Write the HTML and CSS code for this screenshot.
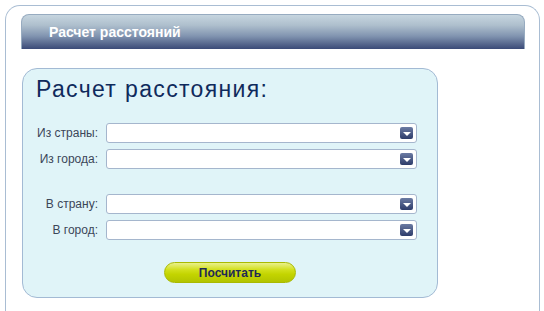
FILE: index.html
```html
<!DOCTYPE html>
<html lang="ru">
<head>
    <meta charset="UTF-8">
    <meta name="viewport" content="width=device-width, initial-scale=1.0">
    <title>Расчет расстояний</title>
    <link rel="stylesheet" href="styles.css">
</head>
<body>
    <div class="frame">
        <div class="frame-header">Расчет расстояний</div>

        <div class="calc-panel">
            <h1>Расчет расстояния:</h1>

            <form class="calc-form">
                <div class="row">
                    <label>Из страны:</label>
                    <div class="combo"><span class="combo-arrow"></span></div>
                </div>
                <div class="row">
                    <label>Из города:</label>
                    <div class="combo"><span class="combo-arrow"></span></div>
                </div>

                <div class="row row-gap">
                    <label>В страну:</label>
                    <div class="combo"><span class="combo-arrow"></span></div>
                </div>
                <div class="row">
                    <label>В город:</label>
                    <div class="combo"><span class="combo-arrow"></span></div>
                </div>

                <div class="actions">
                    <button type="button">Посчитать</button>
                </div>
            </form>
        </div>
    </div>
</body>
</html>
```

FILE: styles.css
```css
body {
    margin: 0;
    background: #fff;
    font-family: 'Liberation Sans', Arial, sans-serif;
}

.frame {
    box-sizing: border-box;
    height: 306px;
    margin: 5px 4px 0 5px;
    border: 1px solid #a9bdd3;
    border-bottom: none;
    border-radius: 15px 15px 0 0;
    padding: 8px 14px 0 15px;
}

.frame-header {
    height: 34px;
    border: 1px solid #97abc0;
    border-bottom: none;
    border-radius: 8px 8px 0 0;
    background: linear-gradient(#c6d5df 0%, #aebfcd 30%, #8194b0 62%, #3b4a77 100%);
    color: #fff;
    font-weight: bold;
    font-size: 14px;
    line-height: 34px;
    padding-left: 27px;
}

.calc-panel {
    width: 414px;
    margin: 19px 0 0 1px;
    background: #e0f4f8;
    border: 1px solid #a3bad4;
    border-radius: 15px;
    padding: 7px 0 14px;
}

/* title */
h1 {
    margin: 0 0 0 13px;
    font-weight: normal;
    font-size: 23px;
    line-height: 26px;
    letter-spacing: 1.35px;
    color: #0f2a5c;
}

.calc-form {
    margin-top: 21px;
}

.row {
    display: flex;
    align-items: center;
    gap: 8px;
    margin-bottom: 6px;
}

.row-gap {
    margin-top: 25px;
}

.row label {
    width: 75px;
    text-align: right;
    font-size: 12px;
    color: #3b4658;
}

.combo {
    width: 306px;
    height: 18px;
    background: #fff;
    border: 1px solid #a5b6cd;
    border-radius: 3px;
    display: flex;
    justify-content: flex-end;
    align-items: center;
    padding-right: 3px;
}

.combo-arrow {
    display: flex;
    justify-content: center;
    align-items: center;
    width: 13px;
    height: 12px;
    border-radius: 2px;
    background: linear-gradient(#6b7ba3, #2d3c6a);
}

.combo-arrow::after {
    content: "";
    border-left: 4px solid transparent;
    border-right: 4px solid transparent;
    border-top: 4px solid #fff;
    margin-top: 1px;
}

.actions {
    display: flex;
    justify-content: center;
    margin-top: 22px;
}

.actions button {
    width: 132px;
    height: 21px;
    border: 1px solid #a9ba00;
    border-radius: 11px;
    background: linear-gradient(#eaf08c 0%, #d2e01c 35%, #c3d400 60%, #b2c400 100%);
    font-family: 'Liberation Sans', Arial, sans-serif;
    font-weight: bold;
    font-size: 12px;
    color: #1f2a55;
    padding: 0;
    cursor: pointer;
}
```
